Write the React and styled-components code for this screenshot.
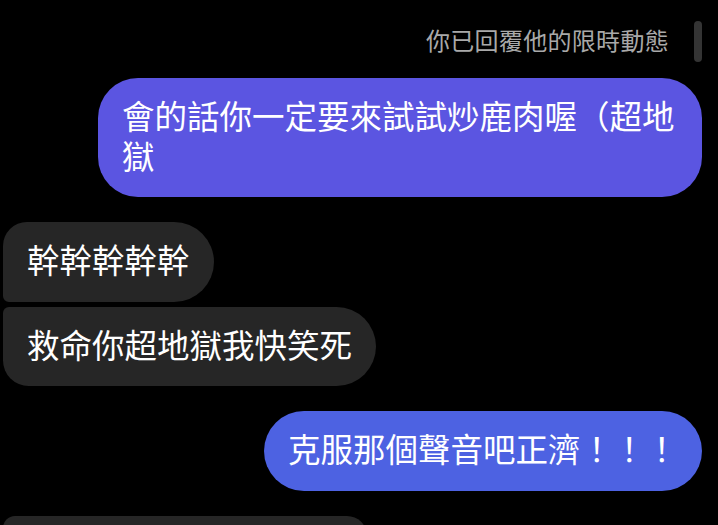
import React from 'react'
import styled, { createGlobalStyle } from 'styled-components'

const GlobalStyle = createGlobalStyle`
  html, body {
    margin: 0;
    padding: 0;
    background: #000;
    overflow: hidden;
  }
  body {
    font-family: "Noto Sans CJK TC", "Noto Sans", sans-serif;
  }
`

// the last bubble is cut by the bottom of the screen, its text is not visible
const messages = [
  { id: 1, mine: true, text: '會的話你一定要來試試炒鹿肉喔（超地獄', tone: 'purple' },
  { id: 2, mine: false, text: '幹幹幹幹幹', pos: 'first' },
  { id: 3, mine: false, text: '救命你超地獄我快笑死', pos: 'last' },
  { id: 4, mine: true, text: '克服那個聲音吧正濟！！！', tone: 'blue' },
  { id: 5, mine: false, text: '', pos: 'first', width: 364 },
]

const App = () => {
  return (
    <>
      <GlobalStyle />
      <Screen>
        <Scrollbar />
        <Notice>你已回覆他的限時動態</Notice>
        <Thread>
          {messages.map((m, i) => {
            const prev = messages[i - 1]
            const grouped = prev && prev.mine === m.mine
            return (
              <Row key={m.id} $mine={m.mine} $grouped={grouped}>
                <Bubble
                  $mine={m.mine}
                  $tone={m.tone}
                  $pos={m.pos}
                  style={m.width ? { width: m.width, boxSizing: 'border-box' } : undefined}
                >
                  {m.text}
                </Bubble>
              </Row>
            )
          })}
        </Thread>
      </Screen>
    </>
  )
}

export default App

const Screen = styled.div`
  position: relative;
  height: 525px;
  overflow: hidden;
  background: #000;
  padding-top: 24px;
  box-sizing: border-box;
`

const Scrollbar = styled.div`
  position: absolute;
  top: 21px;
  right: 16px;
  width: 8px;
  height: 41px;
  border-radius: 4px;
  background: #343434;
`

const Notice = styled.div`
  text-align: right;
  padding-right: 49px;
  font-size: 24px;
  line-height: 32px;
  color: #a9a9a9;
  letter-spacing: 0.3px;
`

const Thread = styled.div`
  display: flex;
  flex-direction: column;
  margin-top: 22px;
`

const Row = styled.div`
  display: flex;
  justify-content: ${p => (p.$mine ? 'flex-end' : 'flex-start')};
  padding: ${p => (p.$mine ? '0 16px 0 0' : '0 0 0 3px')};
  margin-top: ${p => (p.$grouped ? '5px' : '25px')};
  &:first-child {
    margin-top: 0;
  }
`

const radiusFor = p => {
  if (p.$mine) return '40px'
  if (p.$pos === 'first') return '24px 40px 40px 6px'
  if (p.$pos === 'last') return '6px 40px 40px 26px'
  return '6px 40px 40px 6px'
}

const Bubble = styled.div`
  max-width: 556px;
  min-height: 39.5px;
  padding: 17px 24px 23px;
  font-size: 32.5px;
  line-height: 39.5px;
  color: #fff;
  border-radius: ${radiusFor};
  background: ${p =>
    !p.$mine ? '#262626' : p.$tone === 'blue' ? '#4d62e2' : '#5b55e1'};
  word-break: break-all;
`
